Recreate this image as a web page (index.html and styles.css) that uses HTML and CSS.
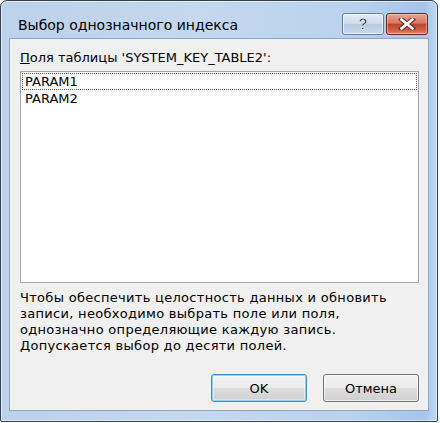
FILE: index.html
```html
<!DOCTYPE html>
<html lang="ru">
<head>
<meta charset="utf-8">
<title>Выбор однозначного индекса</title>
<link rel="stylesheet" href="styles.css">
</head>
<body>
<div class="window">
  <div class="titlebar">
    <div class="title">Выбор однозначного индекса</div>
    <div class="caption-buttons">
      <div class="cap-btn help">
        <svg width="14" height="15" viewBox="0 0 14 15"><path d="M3.2 4.8 C3.2 2.4 4.9 1.2 7 1.2 C9.3 1.2 10.8 2.5 10.8 4.3 C10.8 6 9.6 6.7 8.5 7.3 C7.9 7.7 7.7 8 7.7 8.9 L5.8 8.9 C5.8 7.6 6.1 6.9 7.2 6.3 C8.2 5.7 8.8 5.3 8.8 4.4 C8.8 3.5 8.1 2.9 7 2.9 C6 2.9 5.2 3.5 5.2 4.8 Z" fill="#2a3440" stroke="#ffffff" stroke-width="0.7"/><rect x="5.7" y="10.2" width="2.2" height="2.2" fill="#2a3440" stroke="#ffffff" stroke-width="0.7"/></svg>
      </div>
      <div class="cap-btn close">
        <svg width="18" height="12" viewBox="0 0 18 12"><path d="M3.5 1.5 L14.5 10.5 M14.5 1.5 L3.5 10.5" stroke="#5a1a10" stroke-width="4.6" stroke-linecap="square"/><path d="M3.5 1.5 L14.5 10.5 M14.5 1.5 L3.5 10.5" stroke="#ffffff" stroke-width="2.8" stroke-linecap="square"/></svg>
      </div>
    </div>
  </div>
  <div class="client">
    <div class="label"><u>П</u>оля таблицы 'SYSTEM_KEY_TABLE2':</div>
    <div class="listbox">
      <div class="item focused">PARAM1</div>
      <div class="item">PARAM2</div>
    </div>
    <p class="info">Чтобы обеспечить целостность данных и обновить<br>записи, необходимо выбрать поле или поля,<br>однозначно определяющие каждую запись.<br>Допускается выбор до десяти полей.</p>
    <div class="actions">
      <button class="btn default">OK</button>
      <button class="btn">Отмена</button>
    </div>
  </div>
</div>
</body>
</html>
```
FILE: styles.css
```css
html, body {
  margin: 0;
  padding: 0;
  background: #ffffff;
}

body {
  font-family: "DejaVu Sans", "Noto Sans", sans-serif;
  font-size: 13px;
  color: #000;
}

.window {
  width: 438px;
  height: 422px;
  box-sizing: border-box;
  border: 1px solid #34414f;
  border-radius: 7px 7px 2px 2px;
  background: linear-gradient(90deg, #bcd2ea 0%, #c4d8ee 45%, #bad2ee 80%, #a6c5ea 97%, #bcd6f2 100%);
  box-shadow: inset 0 0 0 1px rgba(255, 255, 255, 0.55);
  display: flex;
  flex-direction: column;
  padding: 0 8px 10px 8px;
}

.titlebar {
  height: 37px;
  display: flex;
  align-items: flex-start;
  justify-content: space-between;
  flex-shrink: 0;
}

.title {
  padding-left: 9px;
  padding-top: 15px;
  font-size: 14px;
  line-height: 18px;
  color: #000;
}

.caption-buttons {
  display: flex;
  gap: 2px;
  margin-top: 12px;
  margin-right: 1px;
}

.cap-btn {
  height: 22px;
  box-sizing: border-box;
  border: 1px solid #6d7f95;
  border-radius: 3px;
  display: flex;
  align-items: center;
  justify-content: center;
}

.help {
  width: 42px;
  background: linear-gradient(180deg, #e3ecf6 0%, #cbdaec 48%, #b6c9e0 52%, #c9daee 100%);
  box-shadow: inset 0 0 0 1px rgba(255, 255, 255, 0.6);
}

.close {
  width: 42px;
  border-color: #6e2a1e;
  background: linear-gradient(180deg, #e8a493 0%, #d37a64 45%, #c1452c 52%, #d0654a 85%, #e0917a 100%);
  box-shadow: inset 0 0 0 1px rgba(255, 220, 210, 0.45);
}

.client {
  flex: 1;
  background: #f0f0f0;
  border: 1px solid #8ea6c2;
  padding: 11px 9px 8px 10px;
  display: flex;
  flex-direction: column;
}

.label {
  line-height: 16px;
  height: 16px;
  margin-bottom: 5px;
}

.listbox {
  height: 212px;
  box-sizing: border-box;
  border: 1px solid #a3a6ab;
  background: #ffffff;
  padding: 1px 1px;
  flex-shrink: 0;
}

.item {
  height: 17px;
  line-height: 17px;
  padding-left: 3px;
  box-sizing: border-box;
}

.item.focused {
  outline: 1px dotted #555;
  outline-offset: -1px;
}

.info {
  margin: 7px 0 0 0;
  line-height: 16px;
  letter-spacing: 0.3px;
}

.actions {
  margin-top: auto;
  display: flex;
  justify-content: flex-end;
  gap: 16px;
}

.btn {
  width: 96px;
  height: 28px;
  font-family: "DejaVu Sans", "Noto Sans", sans-serif;
  font-size: 13px;
  color: #000;
  border: 1px solid #707070;
  border-radius: 3px;
  background: linear-gradient(180deg, #f2f2f2 0%, #ebebeb 48%, #dddddd 52%, #cfcfcf 100%);
  box-shadow: inset 0 0 0 1px rgba(255, 255, 255, 0.75);
  padding: 0;
}

.btn.default {
  border-color: #3c8ec8;
  box-shadow: inset 0 0 0 1px #8fd3f2, inset 0 0 0 2px rgba(255, 255, 255, 0.4);
}
```
